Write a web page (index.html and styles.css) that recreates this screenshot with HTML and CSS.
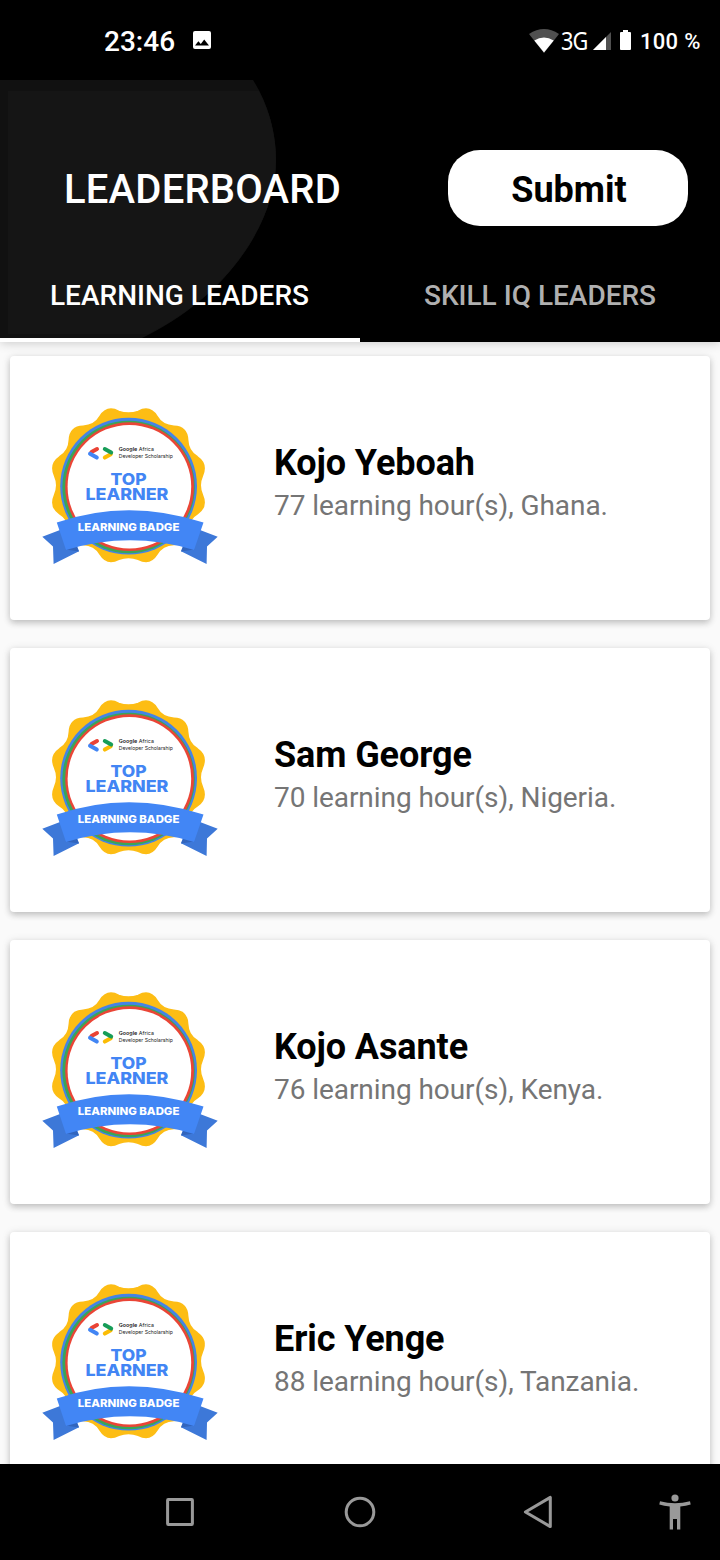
FILE: index.html
```html
<!DOCTYPE html>
<html lang="en">
<head>
<meta charset="utf-8">
<title>Leaderboard</title>
<link rel="stylesheet" href="styles.css">
</head>
<body>
<div class="screen">
  <div class="status">
    <span class="clock">23:46</span>
    <svg class="photo" width="18" height="18" viewBox="0 0 18 18"><rect width="18" height="18" rx="2" fill="#fff"/><path d="M2 14.5L5.4 10.2 7.8 13 11.2 8.5 16 14.5Z" fill="#000"/></svg>
    <svg class="wifi" width="30" height="24" viewBox="0 0 30 24"><path d="M0 5Q15-5 30 5L15 24Z" fill="#505050"/><path d="M5.3 11.4Q15 5.5 24.7 11.4L15 23.5Z" fill="#fff"/></svg>
    <span class="net">3G</span>
    <svg class="signal" width="18" height="18" viewBox="0 0 18 18"><path d="M18 0V18H0Z" fill="#505050"/><path d="M13 5V18H0Z" fill="#fff"/></svg>
    <svg class="battery" width="11" height="20" viewBox="0 0 11 20"><path d="M3 0H8V2H10Q11 2 11 3V19Q11 20 10 20H1Q0 20 0 19V3Q0 2 1 2H3Z" fill="#fff"/></svg>
    <span class="percent">100 %</span>
  </div>

  <header class="header">
    <svg class="header-art" width="360" height="262" viewBox="0 0 360 262"><path fill="#111" d="M0 0H253C268 24 276 52 276 80C276 145 225 218 142 258H0Z"/><path fill="#151515" d="M8 11H259C270 32 276 56 276 80C276 142 228 214 149 254H8Z"/></svg>
    <div class="title-row">
      <h1 class="title">LEADERBOARD</h1>
      <button class="submit">Submit</button>
    </div>
    <nav class="tabs">
      <div class="tab active">LEARNING LEADERS</div>
      <div class="tab">SKILL IQ LEADERS</div>
    </nav>
  </header>

  <main class="list">
    <article class="card">
      <svg class="badge" viewBox="0 0 200 180">
        <g id="badge">
          <path fill="#fdbd14" stroke="#fdbd14" stroke-width="1.6" transform="translate(98.5 90.3)" d="M-9.7-73.9Q0-70.5 9.7-73.9Q21.5-80.1 28.5-68.8Q33.8-59.5 45.4-59.1Q58.6-58.6 59.1-45.4Q59.5-33.8 68.8-28.5Q79-21.5 73.9-9.7Q69.5 0 73.9 9.7Q79 21.5 68.8 28.5Q59.5 33.8 59.1 45.4Q58.6 58.6 45.4 59.1Q33.8 59.5 28.5 68.8Q21.5 80.1 9.7 73.9Q0 70.5-9.7 73.9Q-21.5 80.1-28.5 68.8Q-33.8 59.5-45.4 59.1Q-58.6 58.6-59.1 45.4Q-59.5 33.8-68.8 28.5Q-79 21.5-73.9 9.7Q-69.5 0-73.9-9.7Q-79-21.5-68.8-28.5Q-59.5-33.8-59.1-45.4Q-58.6-58.6-45.4-59.1Q-33.8-59.5-28.5-68.8Q-21.5-80.1-9.7-73.9Z"/>
          <circle cx="98.6" cy="91.2" r="68.4" fill="#4583e6"/>
          <circle cx="98.6" cy="92" r="66.2" fill="#3aa657"/>
          <circle cx="99.6" cy="91.7" r="64.4" fill="#ea4536"/>
          <circle cx="99.4" cy="91.7" r="61.8" fill="#fff"/>
          <path fill="#3d78d8" d="M30 135L12.3 141.8 23 151.5 23.6 169 49 156.2 46 148ZM170 135L187.7 141.8 177 151.5 176.6 169 151 156.2 154 148Z"/>
          <path fill="#3265bd" d="M35.5 154.5L49 156.4 45.5 149ZM164.5 154.5L151 156.4 154.5 149Z"/>
          <path fill="#4286f5" d="M26.8 127.5Q98 102.8 173.5 127.5L164 155Q100 135.5 36 155Z"/>
          <g fill="none" stroke-width="4" stroke-linecap="round">
            <path stroke="#ea4335" d="M67 54L61.5 57"/>
            <path stroke="#4285f4" d="M60 58.8L66.8 62.6"/>
            <path stroke="#fbbc04" d="M74.8 62.6L80.8 59.2"/>
            <path stroke="#179d58" d="M74.8 54L81.2 57.6"/>
          </g>
          <g class="badge-text">
            <text x="88.8" y="56" font-size="5.2" textLength="35.2" lengthAdjust="spacingAndGlyphs" fill="#222"><tspan font-weight="600">Google</tspan> Africa</text>
            <text x="88.8" y="62.7" font-size="5.2" textLength="54" lengthAdjust="spacingAndGlyphs" fill="#222">Developer Scholarship</text>
            <text x="80.6" y="89.7" font-size="15.8" font-weight="800" textLength="36" lengthAdjust="spacingAndGlyphs" fill="#4285f4">TOP</text>
            <text x="55.4" y="104.9" font-size="15.8" font-weight="800" textLength="83" lengthAdjust="spacingAndGlyphs" fill="#4285f4">LEARNER</text>
            <text x="47.8" y="135.5" font-size="10.8" font-weight="800" textLength="101.6" lengthAdjust="spacingAndGlyphs" fill="#fff">LEARNING BADGE</text>
          </g>
        </g>
      </svg>
      <div class="info"><h2 class="name">Kojo Yeboah</h2><p class="detail">77 learning hour(s), Ghana.</p></div>
    </article>
    <article class="card">
      <svg class="badge" viewBox="0 0 200 180"><use href="#badge"/></svg>
      <div class="info"><h2 class="name">Sam George</h2><p class="detail">70 learning hour(s), Nigeria.</p></div>
    </article>
    <article class="card">
      <svg class="badge" viewBox="0 0 200 180"><use href="#badge"/></svg>
      <div class="info"><h2 class="name">Kojo Asante</h2><p class="detail">76 learning hour(s), Kenya.</p></div>
    </article>
    <article class="card">
      <svg class="badge" viewBox="0 0 200 180"><use href="#badge"/></svg>
      <div class="info"><h2 class="name">Eric Yenge</h2><p class="detail">88 learning hour(s), Tanzania.</p></div>
    </article>
  </main>

  <footer class="navbar">
    <svg class="nav-recent" width="28" height="28" viewBox="0 0 28 28"><rect x="1.6" y="1.6" width="24.8" height="24.8" rx=".6"/></svg>
    <svg class="nav-home" width="32" height="32" viewBox="0 0 32 32"><circle cx="16" cy="16" r="13.8"/></svg>
    <svg class="nav-back" width="30" height="34" viewBox="0 0 30 34"><path stroke-linejoin="round" d="M27.3 2.4V31.6L2.4 17Z"/></svg>
    <svg class="nav-access" width="32" height="36" viewBox="0 0 32 36"><circle cx="16" cy="4" r="3.6"/><path d="M1 7.2Q16 11.3 31 7.2L31.7 10.6Q27 11.9 21.3 12.5V35.5H18V25H14V35.5H10.7V12.5Q5 11.9.3 10.6Z"/></svg>
  </footer>
</div>
</body>
</html>
```

FILE: styles.css
```css
* { box-sizing: border-box; }

body {
  margin: 0;
  font-family: Roboto, "Liberation Sans", sans-serif;
}

.screen {
  width: 720px;
  height: 1560px;
  display: flex;
  flex-direction: column;
  overflow: hidden;
  background: #fafafa;
}

.status {
  flex: none;
  height: 80px;
  padding: 2px 20px 0 104px;
  display: flex;
  align-items: center;
  background: #000;
  color: #fff;
  white-space: nowrap;
}

.clock { width: 72px; font-size: 28px; font-weight: 500; }
.photo { margin: -2px 0 0 17px; }
.wifi { margin-left: auto; }
.net {
  width: 29px;
  margin: -3px 0 0 2px;
  font-family: "Noto Sans", sans-serif;
  font-size: 25px;
  letter-spacing: -1px;
  transform: scaleX(0.87);
  transform-origin: left;
}
.signal { margin-left: 3px; }
.battery { margin: -2px 0 0 9px; }
.percent { width: 60px; margin-left: 9px; font-size: 22px; font-weight: 500; letter-spacing: 0.3px; }

.header {
  flex: none;
  position: relative;
  z-index: 1;
  height: 262px;
  padding-top: 70px;
  display: flex;
  flex-direction: column;
  background: #000;
  box-shadow: 0 1px 10px rgba(0, 0, 0, 0.2);
}

.header-art { position: absolute; left: 0; top: 0; }

.title-row {
  position: relative;
  display: flex;
  align-items: center;
  justify-content: space-between;
  height: 76px;
  padding: 0 32px 0 64px;
}

.title { margin: 4px 0 0; color: #fff; font-size: 40px; font-weight: 500; line-height: 48px; letter-spacing: 0.2px; }

.submit {
  width: 240px;
  height: 76px;
  padding: 4px 0 0 2px;
  border: 0;
  border-radius: 32px;
  background: #fff;
  color: #000;
  font: 700 36px Roboto, sans-serif;
}

.tabs { position: relative; display: flex; flex: 1; margin-top: 20px; }

.tab {
  width: 50%;
  padding-top: 33px;
  color: #b0b0b0;
  font-size: 28px;
  font-weight: 500;
  line-height: 33px;
  text-align: center;
  white-space: nowrap;
}

.tab.active { padding-right: 1px; color: #fff; border-bottom: 4px solid #fff; }

.list {
  flex: 1;
  min-height: 0;
  overflow: hidden;
  padding: 14px 10px 0;
  display: flex;
  flex-direction: column;
  gap: 28px;
}

.card {
  flex: none;
  height: 264px;
  padding: 39px 20px 0;
  display: flex;
  border-radius: 4px;
  background: #fff;
  box-shadow: 0 3px 6px rgba(0, 0, 0, 0.18), 0 1px 10px rgba(0, 0, 0, 0.1);
}

.badge { width: 200px; height: 180px; }
.badge-text { font-family: Inter, sans-serif; }
.info { margin: 45px 0 0 44px; white-space: nowrap; }
.name { margin: 0; font-size: 36px; font-weight: 700; line-height: 46px; letter-spacing: -0.1px; color: #000; }
.detail { margin: 3px 0 0; font-size: 28px; line-height: 34px; letter-spacing: -0.06px; color: #757575; }

.navbar {
  flex: none;
  position: relative;
  z-index: 1;
  height: 96px;
  padding: 0 29px 0 166px;
  display: flex;
  align-items: center;
  background: #000;
  fill: none;
  stroke: #999;
  stroke-width: 3;
}

.nav-home { margin-left: 150px; }
.nav-back { margin-left: 147px; }
.nav-access { margin-left: auto; fill: #999; stroke: none; }
```
